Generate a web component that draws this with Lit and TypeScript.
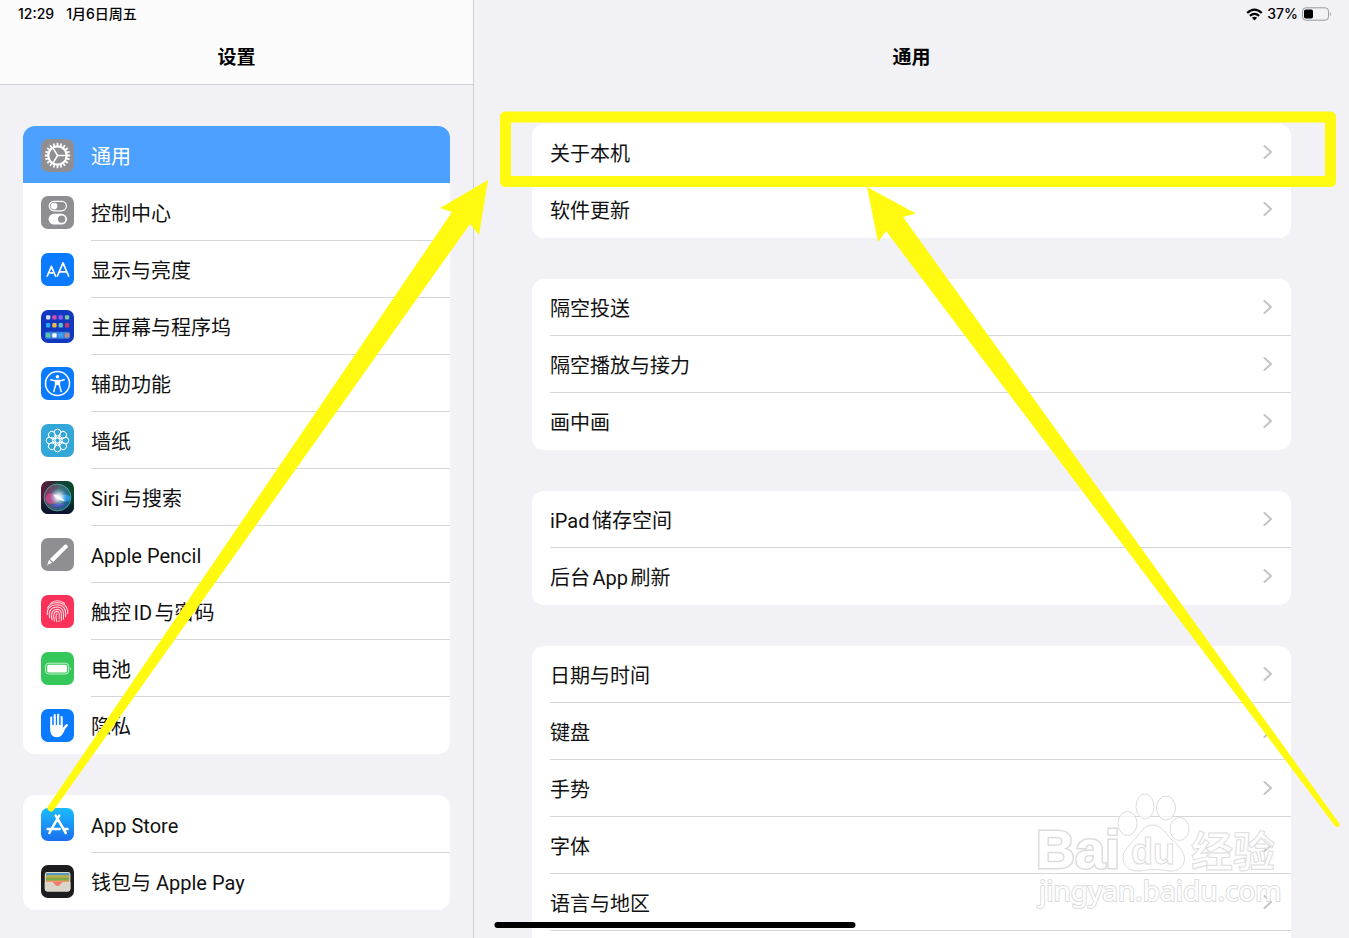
import { LitElement, html, svg, css, nothing } from "lit";
import { customElement, property } from "lit/decorators.js";
import { classMap } from "lit/directives/class-map.js";

interface SideItem {
  icon: string;
  label: string;
  selected?: boolean;
}

const SIDE_GROUPS: SideItem[][] = [
  [
    { icon: "gear", label: "通用", selected: true },
    { icon: "control", label: "控制中心" },
    { icon: "display", label: "显示与亮度" },
    { icon: "home", label: "主屏幕与程序坞" },
    { icon: "access", label: "辅助功能" },
    { icon: "wallpaper", label: "墙纸" },
    { icon: "siri", label: "Siri与搜索" },
    { icon: "pencil", label: "Apple Pencil" },
    { icon: "touch", label: "触控ID与密码" },
    { icon: "battery", label: "电池" },
    { icon: "privacy", label: "隐私" },
  ],
  [
    { icon: "store", label: "App Store" },
    { icon: "wallet", label: "钱包与 Apple Pay" },
  ],
];

const DETAIL_GROUPS: string[][] = [
  ["关于本机", "软件更新"],
  ["隔空投送", "隔空播放与接力", "画中画"],
  ["iPad储存空间", "后台App刷新"],
  ["日期与时间", "键盘", "手势", "字体", "语言与地区"],
];

const range = (n: number) => Array.from({ length: n }, (_, i) => i);
const tile = (fill: string) => svg`<rect width="33" height="33" rx="7" fill=${fill} />`;

const dockColors = [
  ["#cfe0ff", "#d64fa8", "#8f5cf5", "#7cc7a0"],
  ["#2aa7f5", "#f2b84b", "#5cc7c9", "#c23a6b"],
  ["#5ac8a8", "#ffffff", "#35a8f8", "#c98a86"],
];

const ICONS: Record<string, unknown> = {
  gear: svg`
    ${tile("#8e8e93")}
    <g fill="none" stroke="#fff">
      <circle cx="16.5" cy="16.5" r="9.2" stroke-width="2.2" />
      ${range(20).map(
        (i) => svg`<path d="M16.5 3.8V7" stroke-width="1.8" transform="rotate(${i * 18} 16.5 16.5)" />`
      )}
      <path d="M16.5 16.5H25M16.5 16.5L12 8.8M16.5 16.5L12 24.2" stroke-width="1.5" />
    </g>`,
  control: svg`
    ${tile("#8e8e93")}
    <rect x="8.2" y="5.4" width="17.2" height="9.4" rx="4.7" fill="none" stroke="#fff" stroke-width="1.2" />
    <circle cx="13" cy="10.1" r="3.4" fill="#fff" />
    <rect x="7.6" y="17.8" width="18.4" height="10.8" rx="5.4" fill="#fff" />
    <circle cx="20.6" cy="23.2" r="3.6" fill="#8e8e93" />`,
  display: svg`
    ${tile("#0a7aff")}
    <g fill="none" stroke="#fff" stroke-width="1.7" stroke-linejoin="round" stroke-linecap="round">
      <path d="M6.3 23L10.4 13.4L14.5 23M7.8 19.8H13" />
      <path d="M16.4 23L22 9.8L27.6 23M18.3 18.8H25.7" />
    </g>`,
  home: svg`
    ${tile("#1238c0")}
    <rect x="4" y="21.8" width="25" height="7" rx="1.8" fill="#3e83dc" />
    ${dockColors.map((row, r) =>
      row.map(
        (c, i) =>
          svg`<rect x=${5 + i * 6.3} y=${[5.3, 13.1, 23.2][r]} width="4.3" height="4.3" rx="1" fill=${c} />`
      )
    )}`,
  access: svg`
    ${tile("#0a7aff")}
    <circle cx="16.5" cy="16.5" r="12" fill="none" stroke="#fff" stroke-width="1.5" />
    <circle cx="16.5" cy="9.7" r="1.8" fill="#fff" />
    <path d="M9.8 12.8L14.6 13.9V18L12.8 24.6M23.2 12.8L18.4 13.9V18L20.2 24.6" fill="none" stroke="#fff" stroke-width="1.5" stroke-linecap="round" stroke-linejoin="round" />
    <path d="M14 12.8H19V18.6L16.5 18L14 18.6Z" fill="#fff" />`,
  wallpaper: svg`
    ${tile("#33a7d8")}
    <g fill="none" stroke="#fff" stroke-width="1">
      ${range(8).map(
        (i) => svg`<circle cx="16.5" cy="8.5" r="3.3" transform="rotate(${i * 45} 16.5 16.5)" />`
      )}
      <circle cx="16.5" cy="16.5" r="2.4" />
      ${range(8).map(
        (i) => svg`<path d="M16.5 14L14.6 11.4M16.500 14L18.4 11.4" transform="rotate(${i * 45} 16.5 16.5)" />`
      )}
    </g>`,
  siri: svg`
    <defs>
      <linearGradient id="siri-bg" x1="0" y1="0" x2="1" y2="0.4">
        <stop offset="0" stop-color="#6a0c3c" />
        <stop offset="0.5" stop-color="#164038" />
        <stop offset="1" stop-color="#064a2a" />
      </linearGradient>
      <linearGradient id="siri-low" x1="0" y1="0" x2="0" y2="1">
        <stop offset="0.4" stop-color="#0b1030" stop-opacity="0" />
        <stop offset="1" stop-color="#0b1030" />
      </linearGradient>
      <linearGradient id="siri-orb" x1="0" y1="0.2" x2="1" y2="0.6">
        <stop offset="0" stop-color="#c8286e" />
        <stop offset="0.5" stop-color="#5d8a9c" />
        <stop offset="1" stop-color="#1e88d8" />
      </linearGradient>
      <radialGradient id="siri-glow">
        <stop offset="0" stop-color="#fff" />
        <stop offset="0.35" stop-color="#e6f4ff" stop-opacity="0.8" />
        <stop offset="1" stop-color="#7fc0e8" stop-opacity="0" />
      </radialGradient>
    </defs>
    ${tile("url(#siri-bg)")}
    ${tile("url(#siri-low)")}
    <circle cx="16.5" cy="16.5" r="13.4" fill="url(#siri-orb)" opacity="0.6" />
    <circle cx="16.5" cy="16.5" r="13.4" fill="none" stroke="#4f9a93" stroke-width="1" />
    <ellipse cx="11" cy="17.5" rx="6.5" ry="5.5" fill="#e04a92" opacity="0.7" />
    <ellipse cx="24" cy="17" rx="5.5" ry="3.5" fill="#2a9df0" opacity="0.85" />
    <path d="M9 24Q17 29 24 23Q17 22 9 24Z" fill="#5950d8" opacity="0.8" />
    <ellipse cx="17.5" cy="16" rx="9" ry="9" fill="url(#siri-glow)" />
    <path d="M12 13.5Q18 14 24 20Q16.5 20 12 13.5Z" fill="#fff" />`,
  pencil: svg`
    ${tile("#8e8e93")}
    <path d="M23.6 6.8C25 5.6 27.6 7.9 26.6 9.5L12.2 24L8.9 20.9Z" fill="#fff" />
    <path d="M8.1 21.8L11.2 24.8L7.7 26.4L6.6 25.4Z" fill="#fff" />
    <path d="M6.2 26.1L7 26.9L5.8 27.4Z" fill="#fff" />`,
  touch: svg`
    ${tile("#fa3259")}
    <g fill="none" stroke="#ffd9df" stroke-width="1.1" stroke-linecap="round">
      <path d="M9.4 8.4Q16.5 3.2 23.6 8.4" />
      <path d="M6.6 13Q8.5 8.1 16.5 7.5Q25 8 26.7 15.5V18.4" />
      <path d="M6.3 19.5C5.8 13 10 9.8 16.5 9.8C22.8 10 25.2 14.4 24.6 21.6" />
      <path d="M8.6 22.6C7.2 16 10.2 12 16.5 12C21.6 12.2 23.1 16 22.4 24" />
      <path d="M11 24.8C9.4 18.2 11.4 14.2 16.5 14.2C20.2 14.4 20.8 18 20.3 25.6" />
      <path d="M13.4 26C11.8 20 12.9 16.3 16.4 16.4C18.4 16.8 18.5 20 18.2 23.6" />
      <path d="M15.9 26.6C14.7 23 14.8 20.6 15.8 18.8M18.1 25.8V26.6" />
    </g>`,
  battery: svg`
    ${tile("#34c759")}
    <rect x="4.6" y="11.2" width="23" height="10.8" rx="3" fill="none" stroke="#d6f5dd" stroke-width="0.9" />
    <rect x="6.2" y="12.7" width="19.8" height="7.8" rx="1.6" fill="#fff" />
    <path d="M29 14.7Q30.8 16.6 29 18.5Z" fill="#d6f5dd" />`,
  privacy: svg`
    ${tile("#0a7aff")}
    <g fill="none" stroke="#fff" stroke-width="2.2" stroke-linecap="round">
      <path d="M10.3 18.5V8.7M13.7 17V6.2M17.2 17V5.8M20.6 18V8" />
      <path d="M21 21.8L25.7 16.2" stroke-width="2.4" />
    </g>
    <path d="M9.2 15.8H21.7V19.8L24.4 18.4C23.2 23 20.7 28.2 16 28.2C11.4 28.2 9.2 25 9.2 20.5Z" fill="#fff" />
    <path d="M12 9.5V15.8M15.5 8V15.8M18.9 8.5V15.8" stroke="#0a7aff" stroke-width="0.9" stroke-linecap="round" />`,
  store: svg`
    <defs>
      <linearGradient id="store-bg" x1="0" y1="0" x2="0" y2="1">
        <stop offset="0" stop-color="#1bbcfb" />
        <stop offset="1" stop-color="#1a6ff0" />
      </linearGradient>
    </defs>
    ${tile("url(#store-bg)")}
    <g fill="none" stroke="#fff" stroke-width="2.5" stroke-linecap="round">
      <path d="M18.3 7.6L11.3 19.6M14.7 7.6L24.8 25M6.6 21H18.6M22.8 21H26.6M9.4 23.2L8.4 25" />
    </g>`,
  wallet: svg`
    ${tile("#1d1d1f")}
    <rect x="3.8" y="7" width="25.6" height="19.4" rx="2.4" fill="#dcd6ca" />
    <rect x="5" y="8" width="23.2" height="5" rx="1" fill="#4e9bc0" />
    <path d="M5 10.2H28.2V13H5Z" fill="#c9b045" />
    <path d="M5 12.6H28.2V16H5Z" fill="#7fa84a" />
    <path d="M5 15.4H28.2V17.4H5Z" fill="#ee9a68" />
    <path d="M3.8 17H11.2C13.4 17 13.4 20 16.6 20C19.8 20 19.8 17 22 17H29.4V24A2.4 2.4 0 0 1 27 26.4H6.2A2.4 2.4 0 0 1 3.8 24Z" fill="#dcd6ca" />
    <path d="M11.4 17C13.7 18 14 21 16.6 21C19.2 21 19.5 18 21.8 17Z" fill="#f07a70" />`,
};

@customElement("side-row")
class SideRow extends LitElement {
  @property({ attribute: false }) item!: SideItem;

  static styles = css`
    :host {
      display: block;
    }
    .row {
      display: flex;
      align-items: stretch;
      gap: 17px;
      height: 57px;
      padding-left: 18px;
      color: #111;
      text-decoration: none;
    }
    .row.selected {
      background: #4ca0ff;
      color: #fff;
    }
    .icon {
      width: 33px;
      height: 33px;
      margin-top: 1px;
      align-self: center;
      flex: none;
    }
    .label {
      flex: 1;
      display: flex;
      align-items: center;
      padding-top: 4px;
      white-space: pre;
      box-sizing: border-box;
      border-top: 1px solid #d6d6d9;
    }
    :host(.plain) .label {
      border-top-color: transparent;
    }
  `;

  render() {
    const { icon, label, selected } = this.item;
    return html`<a
      class=${classMap({ row: true, selected: !!selected })}
      href="#${icon}"
      aria-current=${selected ? "page" : nothing}
    >
      <svg class="icon" viewBox="0 0 33 33" aria-hidden="true">${ICONS[icon]}</svg>
      <span class="label">${label}</span>
    </a>`;
  }
}

@customElement("detail-row")
class DetailRow extends LitElement {
  @property() label = "";

  static styles = css`
    :host {
      display: block;
    }
    .row {
      display: flex;
      height: 57px;
      padding-left: 18px;
      color: #111;
      text-decoration: none;
    }
    .body {
      flex: 1;
      display: flex;
      align-items: center;
      justify-content: space-between;
      padding-right: 18px;
      box-sizing: border-box;
      border-bottom: 1px solid #d6d6d9;
    }
    .text {
      padding-top: 4px;
    }
    :host(.last) .body {
      border-bottom-color: transparent;
    }
    .chevron {
      width: 10px;
      height: 14px;
      fill: none;
      stroke: #c4c4c6;
      stroke-width: 2;
      stroke-linecap: round;
      stroke-linejoin: round;
    }
  `;

  render() {
    return html`<a class="row" href="#detail">
      <span class="body">
        <span class="text">${this.label}</span>
        <svg class="chevron" viewBox="0 0 10 14" aria-hidden="true"><path d="M1.500 1L8 7L1.500 13" /></svg>
      </span>
    </a>`;
  }
}

@customElement("app-root")
class AppRoot extends LitElement {
  static styles = css`
    :host {
      display: block;
      position: relative;
      height: 100vh;
      overflow: hidden;
      background: #f1f1f6;
      color: #000;
      font: 400 20px/28px Roboto, "Noto Sans CJK SC", sans-serif;
      text-autospace: normal;
    }
    .split {
      display: grid;
      grid-template-columns: 474fr 875fr;
      height: 100%;
    }
    .pane {
      overflow: hidden;
      min-width: 0;
    }
    .sidebar {
      border-right: 1px solid #cfcfd3;
    }
    .head {
      height: 84px;
      border-bottom: 1px solid transparent;
    }
    .sidebar .head {
      background: #fbfbfc;
      border-bottom-color: #d3d3d6;
    }
    .status {
      display: flex;
      align-items: center;
      height: 28px;
      padding: 0 18px;
      font: 500 14px/20px Inter, "Noto Sans CJK SC", sans-serif;
      text-autospace: no-autospace;
      gap: 12px;
    }
    .status.end {
      justify-content: flex-end;
      gap: 4px;
      padding-right: 17px;
    }
    .wifi {
      width: 17px;
      height: 13px;
    }
    .cell {
      width: 30px;
      height: 14px;
    }
    .title {
      margin: 16px 0 0;
      text-align: center;
      font-size: 19px;
      font-weight: 600;
      line-height: 28px;
    }
    .groups {
      display: flex;
      flex-direction: column;
      gap: 41px;
    }
    .sidebar .groups {
      padding: 41px 23px;
    }
    .sidebar .group {
      padding-bottom: 1px;
    }
    .detail .groups {
      padding: 39px 58px;
    }
    .group {
      display: block;
      border-radius: 12px;
      background: #fff;
      overflow: hidden;
      flex: none;
    }
    .tail {
      height: 57px;
    }
    .marks {
      position: absolute;
      inset: 0;
      width: 100%;
      height: 100%;
      pointer-events: none;
      fill: #fffa10;
    }
    .frame {
      fill: none;
      stroke: #fffa10;
      stroke-width: 11;
      stroke-linejoin: round;
    }
    .watermark {
      position: absolute;
      right: 64px;
      bottom: 22px;
      width: 250px;
      height: 126px;
      pointer-events: none;
      fill: rgba(255, 255, 255, 0.7);
      stroke: #dcdcde;
      stroke-width: 1;
    }
    .wm-latin {
      font: 700 54px "Liberation Sans", sans-serif;
      paint-order: stroke;
      stroke-width: 3;
      fill: #fff;
    }
    .wm-du {
      font: 700 36px "Liberation Sans", sans-serif;
    }
    .wm-cjk {
      font: 700 42px "Noto Sans CJK SC", sans-serif;
    }
    .wm-url {
      font: 400 28px "Noto Sans", sans-serif;
      paint-order: stroke;
      stroke-width: 2;
      fill: #fff;
    }
    .home-bar {
      position: absolute;
      left: 50%;
      bottom: 10px;
      width: 361px;
      height: 6px;
      border-radius: 3px;
      background: #000;
      transform: translateX(-50%);
    }
  `;

  render() {
    return html`
      <div class="split">
        <nav class="pane sidebar">
          <header class="head">
            <div class="status"><span>12:29</span><span>1月6日周五</span></div>
            <h1 class="title">设置</h1>
          </header>
          <div class="groups">
            ${SIDE_GROUPS.map(
              (g) => html`<div class="group">
                ${g.map(
                  (item, i) => html`<side-row
                    class=${classMap({ plain: i === 0 || !!g[i - 1].selected })}
                    .item=${item}
                  ></side-row>`
                )}
              </div>`
            )}
          </div>
        </nav>
        <main class="pane detail">
          <header class="head">
            <div class="status end">
              <svg class="wifi" viewBox="0 0 17 13" aria-hidden="true">
                <g fill="none" stroke="#000" stroke-width="2.2">
                  <path d="M1.2 5Q8.5 -1.8 15.8 5" />
                  <path d="M3.9 7.9Q8.5 3.7 13.1 7.9" />
                </g>
                <path d="M5.9 9.8Q8.5 7.5 11.1 9.8L8.5 12.4Z" />
              </svg>
              <span>37%</span>
              <svg class="cell" viewBox="0 0 30 14" aria-hidden="true">
                <rect x="0.5" y="0.8" width="26" height="12.4" rx="3.4" fill="none" stroke="#9a9a9e" />
                <rect x="2" y="2.4" width="9" height="9.2" rx="1.8" />
                <path d="M28 5Q30 7 28 9Z" fill="#9a9a9e" />
              </svg>
            </div>
            <h2 class="title">通用</h2>
          </header>
          <div class="groups">
            ${DETAIL_GROUPS.map((g, gi) => {
              const open = gi === DETAIL_GROUPS.length - 1;
              return html`<div class="group">
                ${g.map(
                  (label, i) => html`<detail-row
                    class=${classMap({ last: !open && i === g.length - 1 })}
                    label=${label}
                  ></detail-row>`
                )}
                ${open ? html`<div class="tail"></div>` : nothing}
              </div>`;
            })}
          </div>
        </main>
      </div>

      <svg class="watermark" viewBox="0 0 250 126" aria-hidden="true">
        <text class="wm-latin" x="1" y="78">Bai</text>
        <ellipse cx="92.5" cy="33.5" rx="9.5" ry="12" />
        <ellipse cx="110" cy="16.5" rx="9" ry="12.5" />
        <ellipse cx="131" cy="18" rx="9.5" ry="12" />
        <ellipse cx="144.5" cy="39" rx="9.5" ry="11.5" />
        <path
          d="M117.5 35C127 35 131 44 137 50C144 56 149.5 62 149.5 69C149.5 77 142 82 134 81C128 80 124 79.5 118 79.5C111 79.5 108 81.5 101 81C93 80 88 75 88 68C88 60 95 55 101 48C106 42 109 35 117.5 35Z"
        />
        <text class="wm-du" x="96" y="74">du</text>
        <text class="wm-cjk" x="156" y="77">经验</text>
        <text class="wm-url" x="4" y="111">jingyan.baidu.com</text>
      </svg>

      <div class="home-bar"></div>

      <svg class="marks" viewBox="0 0 1349 938" preserveAspectRatio="none" aria-hidden="true">
        <rect class="frame" x="505.5" y="117" width="825" height="64.5" />
        <path d="M488 180L440 208L452 212L48.2 806A3.2 3.2 0 0 0 53.8 810L470 224L479 235Z" />
        <path d="M867 187L916 213.5L903 217L1339 823A2.5 2.5 0 0 1 1335 826L886 231L878 242Z" />
      </svg>
    `;
  }
}
